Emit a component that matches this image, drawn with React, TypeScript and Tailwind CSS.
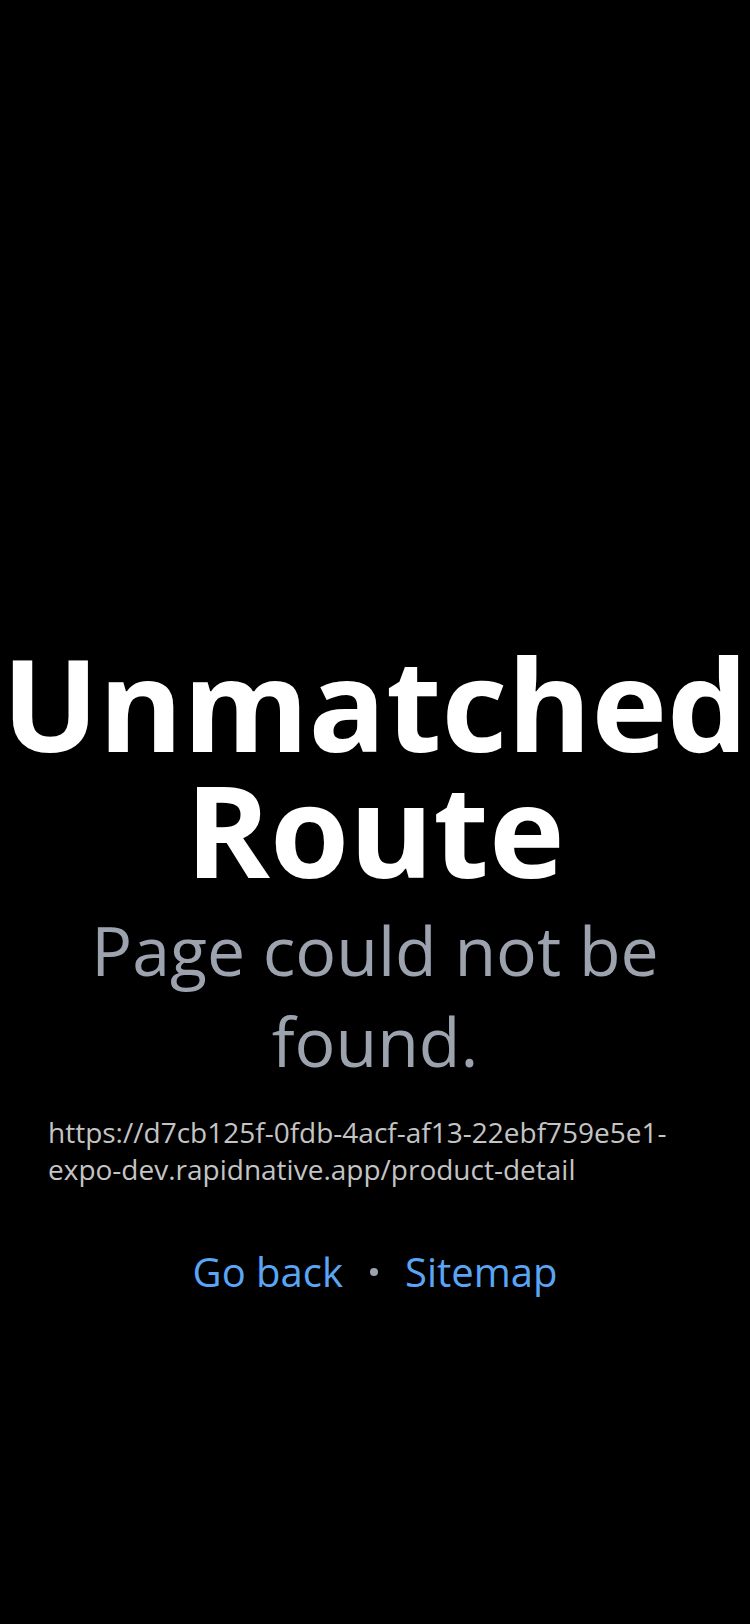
import React from 'react';

const UnmatchedRoute: React.FC = () => {
  const url = 'https://d7cb125f-0fdb-4acf-af13-22ebf759e5e1-expo-dev.rapidnative.app/product-detail';

  return (
    <div
      className="min-h-[1624px] w-full bg-black pt-[640px]"
      style={{ fontFamily: '"Open Sans", "Noto Sans", sans-serif' }}
    >
      {/* Title */}
      <h1 className="text-center text-[128px] leading-[126px] font-bold text-white">
        Unmatched Route
      </h1>

      {/* Subtitle */}
      <p className="mt-[12px] px-6 text-center text-[68px] leading-[91px] text-[#9ca3af]">
        Page could not be found.
      </p>

      {/* Requested URL */}
      <p className="mt-[28px] px-12 text-[28px] leading-[37px] text-[#c4c4c4]">
        {url}
      </p>

      {/* Links */}
      <div className="mt-[56px] flex items-center justify-center">
        <a className="text-[40px] leading-[56px] text-[#5aa5f6]">Go back</a>
        <span className="mx-[27px] h-[8px] w-[8px] rounded-full bg-[#9ca3af]" />
        <a className="text-[40px] leading-[56px] text-[#5aa5f6]">Sitemap</a>
      </div>
    </div>
  );
};

export default function App() {
  return <UnmatchedRoute />;
}
